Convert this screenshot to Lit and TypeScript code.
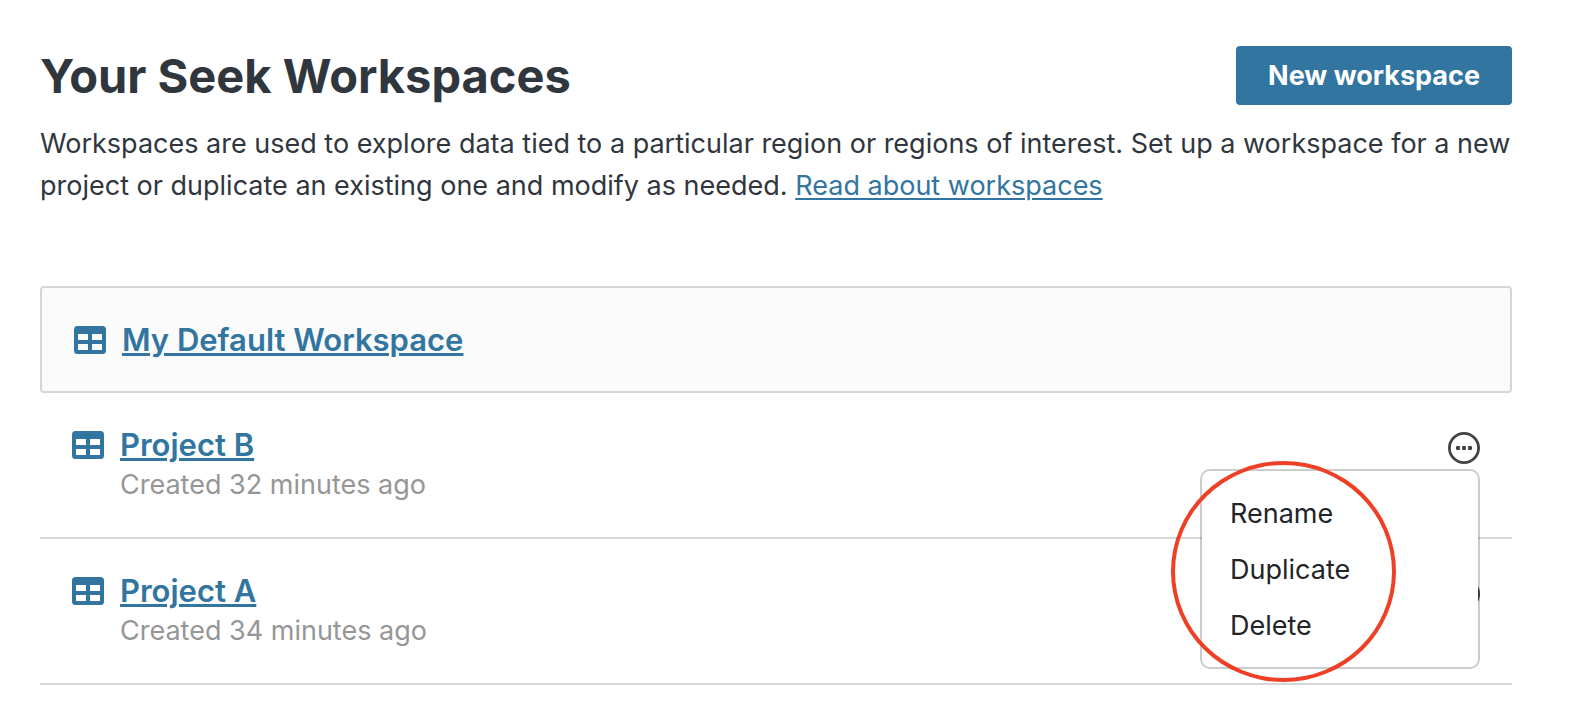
import { LitElement, html, css, svg, nothing } from "lit";
import { customElement, property, state } from "lit/decorators.js";

interface Workspace {
  id: string;
  name: string;
  created?: string;
}

const tableIcon = html`
  <svg class="table-icon" viewBox="0 0 32 28" aria-hidden="true">
    ${svg`<path fill="currentColor" fill-rule="evenodd" d="M3.5 0h25A3.5 3.5 0 0 1 32 3.5v21a3.5 3.5 0 0 1-3.5 3.5h-25A3.5 3.5 0 0 1 0 24.500v-21A3.5 3.5 0 0 1 3.500 0zM4 8v6h10V8zM18 8v6h10V8zM4 18v6h10v-6zM18 18v6h10v-6z"/>`}
  </svg>
`;

const moreIcon = html`
  <svg class="more-icon" viewBox="0 0 32 32" aria-hidden="true">
    <circle cx="16" cy="16" r="14.600" fill="none" stroke="currentColor" stroke-width="2.800" />
    <rect x="8" y="14" width="4" height="4" rx="1" fill="currentColor" />
    <rect x="14" y="14" width="4" height="4" rx="1" fill="currentColor" />
    <rect x="20" y="14" width="4" height="4" rx="1" fill="currentColor" />
  </svg>
`;

@customElement("workspace-menu")
export class WorkspaceMenu extends LitElement {
  static styles = css`
    :host {
      display: block;
      position: relative;
      width: 32px;
      height: 32px;
    }
    :host([open]) {
      z-index: 1;
    }
    .trigger {
      display: block;
      width: 32px;
      height: 32px;
      padding: 0;
      border: 0;
      background: none;
      color: #444;
      cursor: pointer;
    }
    .more-icon {
      display: block;
      width: 32px;
      height: 32px;
    }
    .menu {
      position: absolute;
      top: 37px;
      right: 0;
      box-sizing: border-box;
      width: 280px;
      padding: 15px 0 13px;
      border: 2px solid rgba(0, 0, 0, 0.2);
      border-radius: 10px;
      background: #fff;
      background-clip: padding-box;
    }
    .item {
      display: block;
      width: 100%;
      padding: 7px 28px;
      border: 0;
      background: none;
      color: #212529;
      font: inherit;
      line-height: 42px;
      text-align: left;
      cursor: pointer;
    }
    .highlight {
      position: absolute;
      top: -10px;
      left: -31px;
      box-sizing: border-box;
      width: 225px;
      height: 221px;
      border: 4px solid #ee4026;
      border-radius: 50%;
      pointer-events: none;
    }
  `;

  @property({ type: Boolean, reflect: true }) open = false;
  @property() label = "";

  render() {
    return html`
      <button
        class="trigger"
        type="button"
        aria-haspopup="menu"
        aria-expanded=${this.open}
        aria-label=${this.label}
        @click=${() => (this.open = !this.open)}
      >
        ${moreIcon}
      </button>
      ${this.open
        ? html`
            <div class="menu" role="menu">
              ${["Rename", "Duplicate", "Delete"].map(
                (action) => html`<button class="item" type="button" role="menuitem">${action}</button>`
              )}
              <div class="highlight"></div>
            </div>
          `
        : nothing}
    `;
  }
}

@customElement("app-root")
export class AppRoot extends LitElement {
  static styles = css`
    :host {
      display: block;
      box-sizing: border-box;
      min-height: 100vh;
      padding: 46px 66px 40px 40px;
      background: #fff;
      color: #30363d;
      font-family: Inter, "Liberation Sans", sans-serif;
      font-size: 27px;
      line-height: 42px;
    }
    .header {
      display: flex;
      align-items: center;
      justify-content: space-between;
      gap: 32px;
    }
    .title {
      margin: 0;
      font-size: 47px;
      font-weight: 700;
      line-height: 59px;
    }
    .new {
      padding: 8px 32px;
      border: 0;
      border-radius: 4px;
      background: #3175a0;
      color: #fff;
      font: inherit;
      font-weight: 700;
      line-height: 43px;
      cursor: pointer;
    }
    .intro {
      margin: 18px 0 79px;
    }
    a {
      color: #3175a0;
      text-decoration-thickness: 2px;
      text-underline-offset: 3px;
    }
    .list {
      margin: 0;
      padding: 0;
      list-style: none;
    }
    .row {
      display: flex;
      align-items: flex-start;
      gap: 16px;
      padding: 30px 32px;
      border-bottom: 2px solid #d6d6d6;
    }
    .row.default {
      border: 2px solid #d6d6d6;
      border-radius: 4px;
      background: #fbfbfb;
    }
    .table-icon {
      flex: none;
      width: 32px;
      height: 28px;
      margin-top: 8px;
      color: #3175a0;
    }
    .details {
      display: flex;
      flex: 1;
      flex-direction: column;
      align-items: flex-start;
      min-width: 0;
    }
    .name {
      font-size: 31px;
      font-weight: 600;
      line-height: 43px;
      text-decoration-thickness: 3px;
      text-underline-offset: 2px;
    }
    .created {
      margin: 0;
      padding-bottom: 3px;
      color: #969696;
      line-height: 38px;
    }
    workspace-menu {
      margin-top: 9px;
    }
  `;

  @state() private workspaces: Workspace[] = [
    { id: "default", name: "My Default Workspace" },
    { id: "b", name: "Project B", created: "Created 32 minutes ago" },
    { id: "a", name: "Project A", created: "Created 34 minutes ago" },
  ];

  render() {
    return html`
      <main>
        <header class="header">
          <h1 class="title">Your Seek Workspaces</h1>
          <button class="new" type="button">New workspace</button>
        </header>
        <p class="intro">
          Workspaces are used to explore data tied to a particular region or regions of interest. Set up a
          workspace for a new project or duplicate an existing one and modify as needed.
          <a href="#about">Read about workspaces</a>
        </p>
        <ul class="list">
          ${this.workspaces.map(
            (w) => html`
              <li class="row ${w.created ? "" : "default"}">
                ${tableIcon}
                <div class="details">
                  <a class="name" href="#${w.id}">${w.name}</a>
                  ${w.created ? html`<p class="created">${w.created}</p>` : nothing}
                </div>
                ${w.created
                  ? html`<workspace-menu label="Options for ${w.name}" ?open=${w.id === "b"}></workspace-menu>`
                  : nothing}
              </li>
            `
          )}
        </ul>
      </main>
    `;
  }
}
